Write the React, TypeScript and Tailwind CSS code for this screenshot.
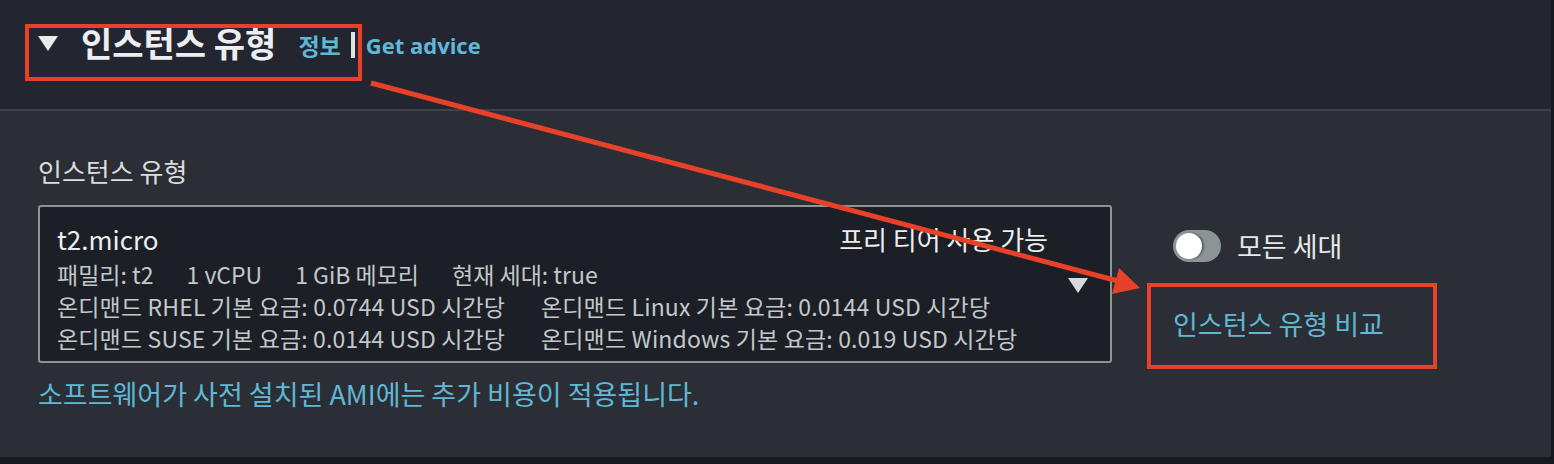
import React from "react";

const rows = [
  ["온디맨드 RHEL 기본 요금: 0.0744 USD 시간당", "온디맨드 Linux 기본 요금: 0.0144 USD 시간당"],
  ["온디맨드 SUSE 기본 요금: 0.0144 USD 시간당", "온디맨드 Windows 기본 요금: 0.019 USD 시간당"],
];

function Arrow() {
  // annotation arrow drawn over the page
  return (
    <svg className="absolute left-0 top-0 pointer-events-none" width="1554" height="464">
      <line x1="371" y1="83" x2="1118" y2="281" stroke="#e8412a" strokeWidth="5" />
      <polygon points="1140,288 1112,294 1119,268" fill="#e8412a" />
    </svg>
  );
}

export default function App() {
  return (
    <div className="relative w-[1554px] h-[464px] bg-[#17191e] font-['Noto_Sans_CJK_KR',sans-serif] overflow-hidden">
      <div className="w-[1551px] h-[457px] flex flex-col">
        <div className="h-[111px] bg-[#232630] border-b-2 border-[#3d4249] flex items-start pl-[38px] pt-[22px]">
          <div className="flex items-center h-[42px]">
            <svg width="20" height="15" viewBox="0 0 20 15" className="mr-[23px]">
              <polygon points="0,0 20,0 10,15" fill="#e9ebed" />
            </svg>
            <h2 className="text-[34px] font-bold text-[#eceef0] leading-[42px]">인스턴스 유형</h2>
            <a className="ml-[22px] mt-[4px] text-[23px] font-bold text-[#5fb8d6]">정보</a>
            <span className="ml-[10px] mr-[11px] w-[4px] h-[26px] mt-[4px] bg-[#dfe2e4]" />
            <a className="mt-[4px] text-[22px] font-bold text-[#5fb8d6] font-['Open_Sans',sans-serif]">Get advice</a>
          </div>
        </div>

        <div className="flex-1 bg-[#2b2e34] pl-[38px] pt-[43px] flex">
          <div className="w-[1074px]">
            <div className="text-[26px] leading-[34px] text-[#d9dcdf]">인스턴스 유형</div>
            <div className="mt-[17px] h-[158px] rounded-[3px] border-2 border-[#8c9496] bg-[#1c1f26] flex">
              <div className="flex-1 pl-[17px] pt-[13px]">
                <div className="flex justify-between text-[26px] leading-[38px] text-[#eceef0]">
                  <span>t2.micro</span>
                  <span className="mr-[-3px]">프리 티어 사용 가능</span>
                </div>
                <div className="flex gap-[33px] text-[23px] leading-[32px] text-[#c3c8cb]">
                  <span>패밀리: t2</span>
                  <span>1 vCPU</span>
                  <span>1 GiB 메모리</span>
                  <span>현재 세대: true</span>
                </div>
                {rows.map((r) => (
                  <div key={r[0]} className="grid grid-cols-[484px_auto] text-[23px] leading-[32px] text-[#c3c8cb] tracking-[0.15px]">
                    <span>{r[0]}</span>
                    <span>{r[1]}</span>
                  </div>
                ))}
              </div>
              <div className="w-[65px] pt-[71px] flex justify-center">
                <svg width="20" height="15" viewBox="0 0 20 15">
                  <polygon points="0,0 20,0 10,15" fill="#d5dbdb" />
                </svg>
              </div>
            </div>
            <div className="mt-[13px] text-[27px] leading-[36px] text-[#5fb8d6]">
              소프트웨어가 사전 설치된 AMI에는 추가 비용이 적용됩니다.
            </div>
          </div>

          <div className="ml-[61px] pt-[76px] relative">
            <div className="flex items-center gap-[16px] h-[32px]">
              <div className="w-[48px] h-[32px] rounded-full bg-[#8b9496] p-[3px] flex items-center">
                <div className="w-[26px] h-[26px] rounded-full bg-white shadow-[2px_0_2px_rgba(0,0,0,0.35)]" />
              </div>
              <span className="text-[27px] leading-[32px] text-[#e6e8ea]">모든 세대</span>
            </div>
            <a className="block mt-[45px] text-[27px] leading-[34px] text-[#5fb8d6]">인스턴스 유형 비교</a>
          </div>
        </div>
      </div>

      {/* annotation boxes */}
      <div className="absolute left-[25px] top-[24px] w-[337px] h-[57px] border-[4px] border-[#e8412a]" />
      <div className="absolute left-[1147px] top-[283px] w-[290px] h-[86px] border-[4px] border-[#e8412a]" />
      <Arrow />
    </div>
  );
}
